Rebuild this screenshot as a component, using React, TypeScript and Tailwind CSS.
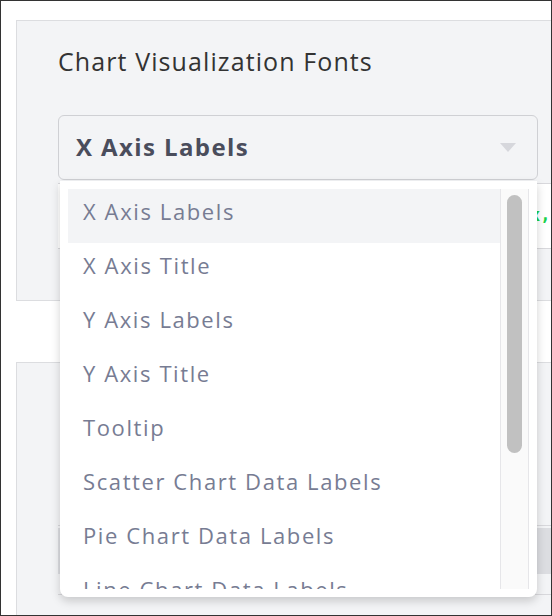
import React from 'react';

// Font targets that can be chosen from the list
const fontTargets: string[] = [
  'X Axis Labels',
  'X Axis Title',
  'Y Axis Labels',
  'Y Axis Title',
  'Tooltip',
  'Scatter Chart Data Labels',
  'Pie Chart Data Labels',
  'Line Chart Data Labels',
];

const Caret: React.FC = () => (
  <svg width="16" height="9" viewBox="0 0 16 9" className="shrink-0">
    <path d="M0 0 L16 0 L8 9 Z" fill="#d6d7dc" />
  </svg>
);

const DropdownMenu: React.FC<{ selected: string }> = ({ selected }) => (
  <div className="absolute left-[59px] top-[180px] w-[477px] h-[416px] bg-white rounded-b-lg shadow-[0_4px_10px_rgba(0,0,0,0.18)] p-2 flex">
    <ul className="flex-1 overflow-hidden">
      {fontTargets.map((name) => (
        <li
          key={name}
          className={
            name === selected
              ? 'h-[54px] shrink-0 flex items-center pl-[15px] pb-[10px] text-[22px] tracking-[1.6px] text-[#777c93] bg-[#f3f4f6] whitespace-nowrap'
              : 'h-[54px] shrink-0 flex items-center pl-[15px] pb-[10px] text-[22px] tracking-[1.6px] text-[#777c93] whitespace-nowrap'
          }
        >
          {name}
        </li>
      ))}
    </ul>
    {/* scrollbar */}
    <div className="relative w-[29px] border-x border-[#e6e6e9] bg-[#fafafa]">
      <div className="absolute left-[6px] top-[6px] w-[15px] h-[258px] rounded-full bg-[#c1c1c1]" />
    </div>
  </div>
);

export default function App() {
  const selected = 'X Axis Labels';

  return (
    <div className="relative w-[552px] h-[616px] overflow-hidden border border-[#333] bg-white font-['Open_Sans',sans-serif]">
      <div className="pl-[15px] pt-[19px]">
        {/* Chart fonts panel */}
        <section className="h-[281px] border border-r-0 border-[#dcdde0] bg-[#f3f4f6] pl-[41px] pt-[24px]">
          <h2 className="text-[25px] leading-8 tracking-[1.1px] text-[#333]">Chart Visualization Fonts</h2>
          <div className="mt-[38px] w-[480px] h-[65px] border border-[#cfd0d4] rounded-md flex items-center justify-between pl-[17px] pr-[21px]">
            <span className="text-[24px] font-bold tracking-[1.4px] text-[#4a4d5c] pb-[2px]">{selected}</span>
            <Caret />
          </div>
          <div className="mt-[3px] h-[66px] border-y border-[#d8d8dc] bg-white flex items-center pl-[472px]">
            <span className="font-['DejaVu_Sans_Mono',monospace] font-bold text-[17px] text-[#19d24a] whitespace-nowrap">x,</span>
          </div>
        </section>

        {/* Next panel, mostly hidden */}
        <section className="mt-[61px] h-[300px] border border-r-0 border-[#dcdde0] bg-[#f3f4f6] pl-[41px] pt-[162px]">
          <div className="border-t border-[#d8d8dc] pt-[2px]">
            <div className="h-[46px] bg-[#dcdde1]" />
          </div>
          <div className="mt-[20px] border-t border-[#d8d8dc]" />
        </section>
      </div>

      <DropdownMenu selected={selected} />
    </div>
  );
}
